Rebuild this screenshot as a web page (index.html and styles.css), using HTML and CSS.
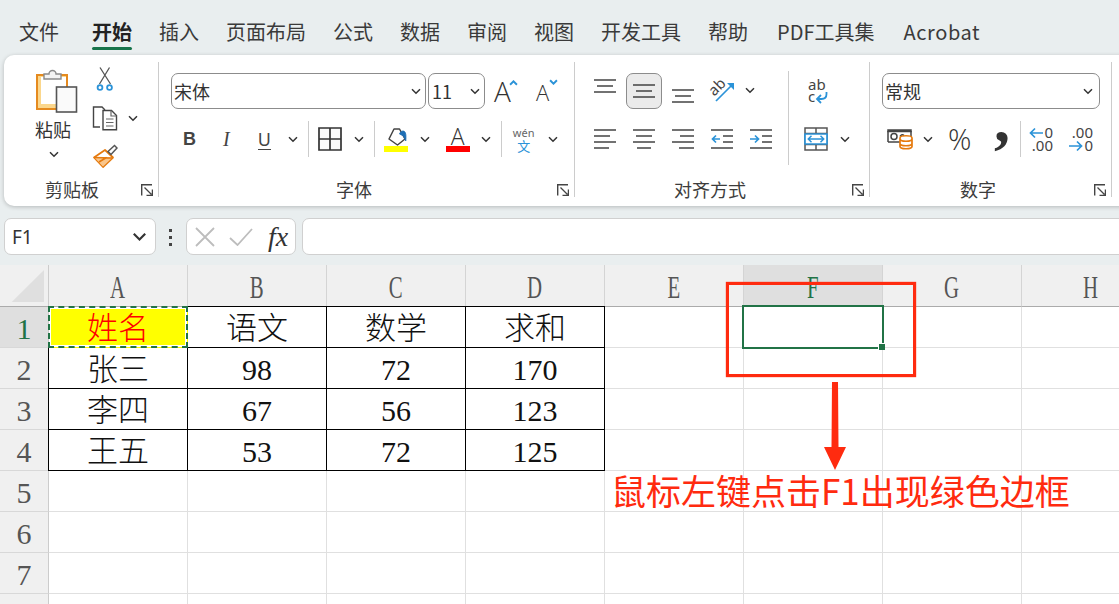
FILE: index.html
```html
<!DOCTYPE html>
<html lang="zh">
<head>
<meta charset="utf-8">
<title>Excel</title>
<link rel="stylesheet" href="styles.css">
</head>
<body>
<svg class="sprite" aria-hidden="true">
  <symbol id="chev" viewBox="0 0 10 7"><path d="M1 1.200 5 5.200 9 1.200" fill="none" stroke="#333" stroke-width="1.500"/></symbol>
  <symbol id="launch" viewBox="0 0 12 12"><path d="M.7 11.500V.7H11" fill="none" stroke="#444" stroke-width="1.400"/><path d="M3.500 3.500 10.500 10.500M11.400 5.500v5.900H5.500" fill="none" stroke="#444" stroke-width="1.300"/></symbol>
</svg>

<nav class="tabs">
  <span class="tab first">文件</span>
  <span class="tab active">开始</span>
  <span class="tab">插入</span>
  <span class="tab">页面布局</span>
  <span class="tab">公式</span>
  <span class="tab">数据</span>
  <span class="tab">审阅</span>
  <span class="tab">视图</span>
  <span class="tab">开发工具</span>
  <span class="tab wide">帮助</span>
  <span class="tab wide">PDF工具集</span>
  <span class="tab latin">Acrobat</span>
</nav>

<section class="ribbon">
  <div class="group g-clip">
    <div class="clip-body">
      <div class="paste">
        <svg class="ic-paste" viewBox="36 68 42 46">
          <rect x="37" y="75" width="30" height="34" fill="#fbd78c" stroke="#e58a1f" stroke-width="2"/>
          <rect x="41" y="77" width="25" height="27" fill="#fff"/>
          <path d="M44 79v-5h5a3.500 3.500 0 0 1 7 0h5v5z" fill="#f3f3f3" stroke="#8a8a8a" stroke-width="1.400"/>
          <rect x="56.500" y="87" width="20" height="25" fill="#fafafa" stroke="#555" stroke-width="1.600"/>
        </svg>
        <span class="paste-txt">粘贴</span>
        <svg class="chev paste-chev"><use href="#chev"/></svg>
      </div>
      <div class="clip-tools">
        <svg class="ic-cut" viewBox="96 66 18 26">
          <path d="M100 67.500 110.500 84M109.500 67.500 99.500 84" fill="none" stroke="#555" stroke-width="1.300"/>
          <circle cx="100" cy="87.500" r="2.400" fill="#fff" stroke="#2b93d8" stroke-width="1.800"/>
          <circle cx="109.500" cy="87.500" r="2.400" fill="#fff" stroke="#2b93d8" stroke-width="1.800"/>
        </svg>
        <div class="copy-row">
          <svg class="ic-copy" viewBox="92 105 26 26">
            <path d="M100 127h-6.500v-20H102l3 3" fill="none" stroke="#444" stroke-width="1.400"/>
            <path d="M103 110.500h8.500l5 5v14.300H103z" fill="#fff" stroke="#444" stroke-width="1.400"/>
            <path d="M111 110.500v5.500h5.500M106 119h7.500M106 122.500h7.500M106 126h7.500" fill="none" stroke="#666" stroke-width="1.200"/>
          </svg>
          <svg class="chev copy-chev"><use href="#chev"/></svg>
        </div>
        <svg class="ic-brush" viewBox="92 144 26 25">
          <path d="M94 157.500 105 150l8 7.500-10 9.500z" fill="#fff" stroke="#e57a0e" stroke-width="1.800" stroke-linejoin="round"/>
          <path d="M94.500 157.500 112 158l-9 8.500z" fill="#f9c58a"/>
          <path d="M94 157.500 112.500 158M99 162 106.500 157.500" fill="none" stroke="#e57a0e" stroke-width="1.600"/>
          <path d="M108 151.500l6.500-6 2.500 2.500-6 6.500z" fill="#fff" stroke="#555" stroke-width="1.500"/>
        </svg>
      </div>
    </div>
    <div class="label-row pl-clip"><span class="glabel">剪贴板</span><svg class="launch"><use href="#launch"/></svg></div>
  </div>

  <div class="group g-font">
    <div class="row r1">
      <div class="select sel-font"><span>宋体</span><svg class="chev"><use href="#chev"/></svg></div>
      <div class="select sel-size"><span>11</span><svg class="chev"><use href="#chev"/></svg></div>
      <span class="grow-a">A<svg class="caret" viewBox="0 0 10 7"><path d="M1 5.500 5 1.500 9 5.500" fill="none" stroke="#2b93d8" stroke-width="2.200"/></svg></span>
      <span class="shrink-a">A<svg class="caret" viewBox="0 0 10 7"><path d="M1 1.500 5 5.500 9 1.500" fill="none" stroke="#2b93d8" stroke-width="2.200"/></svg></span>
    </div>
    <div class="row r2">
      <b class="fb">B</b>
      <i class="fi">I</i>
      <span class="fu">U</span>
      <svg class="chev u-chev"><use href="#chev"/></svg>
      <span class="vsep s1"></span>
      <svg class="ic-border" viewBox="0 0 24 24"><path d="M1 1h22v22H1zM12 1v22M1 12h22" fill="#fafafa" stroke="#333" stroke-width="1.700"/></svg>
      <svg class="chev b-chev"><use href="#chev"/></svg>
      <span class="vsep s2"></span>
      <span class="fill-ic">
        <svg class="ic-fill" viewBox="0 0 26 19">
          <path d="M10 2h5.500L21 12l-7.500 6L5 12z" fill="#fff" stroke="#444" stroke-width="1.500" stroke-linejoin="round"/>
          <path d="M15.500 7c1-3 3.500-3.500 5-2.500 1.500 1.200 1.700 4.500 1.300 9.500l-2.300-5z" fill="#1f6fb5" stroke="#1f6fb5" stroke-width=".8"/>
        </svg>
        <span class="bar yellow"></span>
      </span>
      <svg class="chev f-chev"><use href="#chev"/></svg>
      <span class="color-a">A<span class="bar red"></span></span>
      <svg class="chev a-chev"><use href="#chev"/></svg>
      <span class="vsep s3"></span>
      <span class="wen"><span class="wen-top">wén</span><span class="wen-bot">文</span></span>
      <svg class="chev w-chev"><use href="#chev"/></svg>
    </div>
    <div class="label-row pl-font"><span class="glabel">字体</span><svg class="launch"><use href="#launch"/></svg></div>
  </div>

  <div class="group g-align">
    <div class="align-body">
      <div class="align-main">
        <div class="row r1 top-align">
          <svg class="ln al-top" viewBox="0 0 22 14"><path d="M0 1h22M3 7h16M0 13h22" stroke="#444" stroke-width="1.500"/></svg>
          <span class="btn-on"><svg class="ln" viewBox="0 0 22 14"><path d="M0 1h22M3 7h16M0 13h22" stroke="#444" stroke-width="1.500"/></svg></span>
          <svg class="ln al-bot" viewBox="0 0 22 14"><path d="M0 1h22M3 7h16M0 13h22" stroke="#444" stroke-width="1.500"/></svg>
          <svg class="ic-orient" viewBox="0 0 26 24">
            <text x="8" y="13" text-anchor="middle" transform="rotate(-45 8 8)" class="svg-t">ab</text>
            <path d="M7 22 23 6" fill="none" stroke="#2b93d8" stroke-width="1.700"/>
            <path d="M18 4h7v7z" fill="#2b93d8"/>
          </svg>
          <svg class="chev or-chev"><use href="#chev"/></svg>
        </div>
        <div class="row r2">
          <svg class="ln2 first-ln" viewBox="0 0 22 20"><path d="M0 1h22M0 7h16M0 13h22M0 19h15" stroke="#444" stroke-width="1.500"/></svg>
          <svg class="ln2 next-ln" viewBox="0 0 22 20"><path d="M0 1h22M3 7h16M0 13h22M4 19h14" stroke="#444" stroke-width="1.500"/></svg>
          <svg class="ln2 next-ln" viewBox="0 0 22 20"><path d="M0 1h22M8 7h14M0 13h22M7 19h15" stroke="#444" stroke-width="1.500"/></svg>
          <svg class="ln2 next-ln" viewBox="0 0 22 20"><path d="M0 1h22M12 7h10M12 13h10M0 19h22" stroke="#444" stroke-width="1.500"/><path d="M9 10H1.500M5 6.500 1.500 10 5 13.500" fill="none" stroke="#2b93d8" stroke-width="1.700"/></svg>
          <svg class="ln2 next-ln" viewBox="0 0 22 20"><path d="M0 1h22M12 7h10M12 13h10M0 19h22" stroke="#444" stroke-width="1.500"/><path d="M0 10h7.500M5 6.500 8.500 10 5 13.500" fill="none" stroke="#2b93d8" stroke-width="1.700"/></svg>
        </div>
      </div>
      <span class="vsep tall"></span>
      <div class="align-side">
        <svg class="ic-wrap" viewBox="0 0 24 24">
          <text x="0" y="10" class="svg-t">ab</text>
          <text x="0" y="22" class="svg-t">c</text>
          <path d="M18.500 12v2q0 5-5 5H9M13 15l-4 4 4 4" fill="none" stroke="#2b93d8" stroke-width="1.800"/>
        </svg>
        <div class="merge-row">
          <svg class="ic-merge" viewBox="0 0 24 24">
            <path d="M1 1h22v22H1zM1 6.500h22M1 17.500h22M12 1v5.500M12 17.500V23" fill="#fff" stroke="#555" stroke-width="1.500"/>
            <path d="M1 7h22v10H1z" fill="#fff" stroke="#2b93d8" stroke-width="1.700"/>
            <path d="M4 12h16M7.500 8.800 4.300 12l3.200 3.200M16.500 8.800 19.700 12l-3.200 3.200" fill="none" stroke="#2b93d8" stroke-width="1.500"/>
          </svg>
          <svg class="chev m-chev"><use href="#chev"/></svg>
        </div>
      </div>
    </div>
    <div class="label-row pl-align"><span class="glabel">对齐方式</span><svg class="launch"><use href="#launch"/></svg></div>
  </div>

  <div class="group g-num">
    <div class="row r1">
      <div class="select sel-num"><span>常规</span><svg class="chev"><use href="#chev"/></svg></div>
    </div>
    <div class="row r2">
      <svg class="ic-acct" viewBox="0 0 26 22">
        <path d="M1 2h23v1.500H1zM1 14h12" fill="none" stroke="#444" stroke-width="1.500"/>
        <path d="M1 3v11M24 3v6" fill="none" stroke="#444" stroke-width="1.500"/>
        <circle cx="7" cy="8.500" r="3" fill="none" stroke="#444" stroke-width="1.500"/>
        <path d="M13 8.500q2-3 4 -1" fill="none" stroke="#444" stroke-width="1.500"/>
        <path d="M13 10v8.500c0 3 12 3 12 0V10c0-3-12-3-12 0zM13 11c0 3 12 3 12 0M13 15.500c0 3 12 3 12 0" fill="#fff" stroke="#e57a0e" stroke-width="1.700"/>
      </svg>
      <svg class="chev ac-chev"><use href="#chev"/></svg>
      <span class="pct">%</span>
      <span class="comma">,</span>
      <span class="vsep s4"></span>
      <span class="dec d-inc"><span class="dec-a"><svg class="arr" viewBox="0 0 14 12"><path d="M14 6H1.500M6 1.500 1.500 6 6 10.500" fill="none" stroke="#2b93d8" stroke-width="1.700"/></svg>0</span><span class="dec-b">.00</span></span>
      <span class="dec d-dec"><span class="dec-a">.00</span><span class="dec-b"><svg class="arr" viewBox="0 0 14 12"><path d="M0 6h12.500M8 1.500 12.500 6 8 10.500" fill="none" stroke="#2b93d8" stroke-width="1.700"/></svg>0</span></span>
    </div>
    <div class="label-row pl-num"><span class="glabel">数字</span><svg class="launch"><use href="#launch"/></svg></div>
  </div>
</section>

<section class="fbar">
  <div class="namebox"><span>F1</span><svg class="chev big"><use href="#chev"/></svg></div>
  <div class="dots"><i></i><i></i><i></i></div>
  <div class="fx-box">
    <svg class="ic-x" viewBox="0 0 20 20"><path d="M1 1 19 19M19 1 1 19" stroke="#bdbdbd" stroke-width="1.800"/></svg>
    <svg class="ic-ok" viewBox="0 0 24 18"><path d="M1 10 8.500 17 23 1" fill="none" stroke="#bdbdbd" stroke-width="1.800"/></svg>
    <span class="fx">fx</span>
  </div>
  <div class="finput"></div>
</section>

<main class="sheet-wrap">
  <div class="sheet">
    <div class="corner"><svg viewBox="0 0 48 41"><path d="M45 5V38H12z" fill="#dfdfdf"/></svg></div>
    <div class="ch"><span class="lt">A</span></div><div class="ch"><span class="lt">B</span></div><div class="ch"><span class="lt">C</span></div><div class="ch"><span class="lt">D</span></div><div class="ch"><span class="lt">E</span></div><div class="ch sel"><span class="lt">F</span></div><div class="ch"><span class="lt">G</span></div><div class="ch"><span class="lt">H</span></div>

    <div class="rh sel">1</div><div class="c a1 z">姓名</div><div class="c k t z">语文</div><div class="c k t z">数学</div><div class="c k t z">求和</div><div class="c"></div><div class="c"></div><div class="c"></div><div class="c"></div>
    <div class="rh">2</div><div class="c k l z">张三</div><div class="c k">98</div><div class="c k">72</div><div class="c k">170</div><div class="c"></div><div class="c"></div><div class="c"></div><div class="c"></div>
    <div class="rh">3</div><div class="c k l z">李四</div><div class="c k">67</div><div class="c k">56</div><div class="c k">123</div><div class="c"></div><div class="c"></div><div class="c"></div><div class="c"></div>
    <div class="rh">4</div><div class="c k l z">王五</div><div class="c k">53</div><div class="c k">72</div><div class="c k">125</div><div class="c"></div><div class="c"></div><div class="c"></div><div class="c"></div>
    <div class="rh">5</div><div class="c"></div><div class="c"></div><div class="c"></div><div class="c"></div><div class="c"></div><div class="c"></div><div class="c"></div><div class="c"></div>
    <div class="rh">6</div><div class="c"></div><div class="c"></div><div class="c"></div><div class="c"></div><div class="c"></div><div class="c"></div><div class="c"></div><div class="c"></div>
    <div class="rh">7</div><div class="c"></div><div class="c"></div><div class="c"></div><div class="c"></div><div class="c"></div><div class="c"></div><div class="c"></div><div class="c"></div>
    <div class="rh"></div><div class="c"></div><div class="c"></div><div class="c"></div><div class="c"></div><div class="c"></div><div class="c"></div><div class="c"></div><div class="c"></div>
  </div>
  <div class="selection"><span class="handle"></span></div>
  <div class="callout"></div>
  <svg class="arrow" viewBox="0 0 24 90"><path d="M9 0H15L15.500 65H23L12 88 1 65H8.500z" fill="#ff2b0f"/></svg>
  <div class="note">鼠标左键点击F1出现绿色边框</div>
</main>
</body>
</html>
```
FILE: styles.css
```css
* { box-sizing: border-box; }
html, body { margin: 0; height: 100%; }
body {
  width: 1119px;
  height: 604px;
  overflow: hidden;
  background: #e9eeef;
  color: #333;
  font-family: "Noto Sans CJK SC", "Noto Sans", sans-serif;
}
.sprite { display: none; }

/* tabs */
.tabs { display: flex; height: 55px; padding: 17px 0 0 19px; font-size: 20px; line-height: 30px; color: #3a3a3a; }
.tab { position: relative; margin-right: 27px; flex: none; height: 33px; }
.tab.first { margin-right: 33px; }
.tab.wide { margin-right: 29px; }
.tab.latin { letter-spacing: .6px; }
.tab.active { font-weight: 700; color: #222; }
.tab.active::after { content: ""; position: absolute; left: 0; right: 0; top: 30px; height: 3px; border-radius: 2px; background: #17734a; }

/* ribbon */
.ribbon { display: flex; height: 151px; margin-left: 4px; width: 1140px; padding-top: 7px; background: #fff; border-radius: 10px 0 0 10px; box-shadow: 0 1px 4px rgba(0,0,0,.22); }
.group { display: flex; flex-direction: column; flex: none; height: 135px; border-right: 1px solid #ccc; }
.g-clip { width: 155px; }
.g-font { width: 416px; }
.g-align { width: 295px; }
.g-num { width: 242px; }
.chev { width: 10px; height: 7px; flex: none; display: block; }
.launch { width: 12px; height: 12px; flex: none; display: block; }
.glabel { font-size: 18px; line-height: 24px; color: #3c3c3c; white-space: nowrap; }
.label-row { display: flex; align-items: center; height: 24px; margin-top: auto; margin-bottom: -4px; }
.pl-clip { padding-left: 41px; }
.pl-clip .launch { margin-left: 42px; margin-top: 2px; }
.pl-font { padding-left: 177px; }
.pl-font .launch { margin-left: 185px; margin-top: 2px; }
.pl-align { padding-left: 99px; }
.pl-align .launch { margin-left: 106px; margin-top: 2px; }
.pl-num { padding-left: 90px; }
.pl-num .launch { margin-left: 98px; margin-top: 2px; }

.clip-body { display: flex; }
.paste { display: flex; flex-direction: column; width: 89px; padding: 6px 0 0 32px; }
.ic-paste { width: 42px; height: 46px; flex: none; }
.paste-txt { font-size: 18px; line-height: 24px; margin: 3px 0 0 -1px; color: #333; white-space: nowrap; }
.paste-chev { margin: 10px 0 0 13px; }
.clip-tools { display: flex; flex-direction: column; }
.ic-cut { width: 18px; height: 26px; margin: 4px 0 0 3px; }
.copy-row { display: flex; align-items: center; margin: 13px 0 0 -1px; }
.ic-copy { width: 26px; height: 26px; }
.copy-chev { margin-left: 10px; }
.ic-brush { width: 26px; height: 25px; margin: 13px 0 0 -1px; }

.row { display: flex; align-items: center; flex: none; }
.r1 { height: 36px; margin-top: 11px; }
.r2 { height: 36px; margin-top: 12px; }
.select { display: flex; align-items: center; justify-content: space-between; height: 36px; padding: 0 4px 0 2px; border: 1px solid #8c8c8c; border-radius: 7px; background: #fff; font-size: 18px; line-height: 24px; color: #333; flex: none; }
.sel-font { width: 255px; margin-left: 12px; }
.sel-size { width: 57px; margin-left: 2px; padding-left: 3px; }
.sel-num { width: 218px; margin-left: 12px; padding-right: 6px; }
.grow-a, .shrink-a { position: relative; display: block; flex: none; font-family: "Open Sans", sans-serif; font-weight: 300; color: #333; line-height: 36px; }
.grow-a { font-size: 28px; width: 24px; margin-left: 9px; }
.shrink-a { font-size: 22px; width: 20px; margin-left: 18px; padding-top: 2px; }
.caret { position: absolute; width: 9px; height: 6px; }
.grow-a .caret { left: 15px; top: 7px; }
.shrink-a .caret { left: 13px; top: 7px; }

.fb, .fi, .fu { display: block; flex: none; font-size: 18px; line-height: 24px; color: #444; }
.fb { font-family: "Liberation Sans", sans-serif; margin-left: 24px; }
.fi { font-family: "Liberation Serif", serif; font-size: 20px; margin-left: 27px; }
.fu { font-family: "Noto Sans", sans-serif; margin-left: 28px; border-bottom: 1.500px solid #444; line-height: 20px; width: 13px; text-align: center; }
.u-chev { margin-left: 17px; }
.vsep { display: block; flex: none; width: 1px; height: 36px; background: #ccc; }
.s1 { margin-left: 10px; }
.ic-border { width: 24px; height: 24px; margin-left: 9px; flex: none; }
.b-chev { margin-left: 12px; }
.s2 { margin-left: 10px; }
.fill-ic { display: flex; flex-direction: column; width: 26px; margin-left: 9px; flex: none; }
.ic-fill { width: 26px; height: 19px; }
.bar { display: block; height: 6px; width: 24px; }
.yellow { background: #ffff00; }
.red { background: #ff0000; }
.f-chev { margin-left: 10px; }
.color-a { display: flex; flex-direction: column; width: 24px; margin-left: 16px; flex: none; align-items: center; font-family: "Open Sans", sans-serif; font-weight: 300; font-size: 23px; line-height: 19px; color: #333; }
.a-chev { margin-left: 11px; }
.s3 { margin-left: 10px; }
.wen { display: flex; flex-direction: column; align-items: center; width: 24px; margin-left: 10px; flex: none; }
.wen-top { font-family: "Noto Sans", sans-serif; font-size: 11px; line-height: 13px; color: #666; }
.wen-bot { font-size: 13px; line-height: 13px; color: #2b93d8; }
.w-chev { margin-left: 12px; }

.align-body { display: flex; }
.align-main { width: 212px; }
.top-align { align-items: flex-start; }
.ln { width: 22px; height: 14px; display: block; flex: none; }
.al-top { margin: 6px 0 0 19px; }
.btn-on { display: flex; align-items: center; justify-content: center; flex: none; width: 36px; height: 36px; margin-left: 10px; border: 1px solid #8c8c8c; border-radius: 7px; background: #ebebeb; }
.al-bot { margin: 16px 0 0 10px; }
.ic-orient { width: 26px; height: 24px; margin: 6px 0 0 15px; flex: none; overflow: visible; }
.svg-t { font-family: "Noto Sans", sans-serif; font-size: 15px; fill: #444; }
.or-chev { margin: 14px 0 0 10px; }
.ln2 { width: 22px; height: 20px; flex: none; }
.first-ln { margin-left: 19px; }
.next-ln { margin-left: 17px; }
.tall { height: 94px; margin: 9px 0 0 1px; }
.align-side { display: flex; flex-direction: column; }
.ic-wrap { width: 24px; height: 24px; margin: 18px 0 0 19px; overflow: visible; }
.merge-row { display: flex; align-items: center; margin: 23px 0 0 15px; }
.ic-merge { width: 24px; height: 24px; flex: none; }
.m-chev { margin-left: 12px; }

.ic-acct { width: 26px; height: 22px; margin-left: 17px; flex: none; }
.ac-chev { margin-left: 10px; }
.pct { font-family: "Open Sans", sans-serif; font-weight: 300; font-size: 29px; line-height: 36px; color: #333; margin-left: 15px; flex: none; width: 24px; }
.comma { align-self: flex-start; font-family: "Liberation Serif", serif; font-weight: 700; font-size: 64px; line-height: 36px; height: 36px; color: #333; margin: -19px 0 0 22px; flex: none; width: 12px; }
.s4 { margin-left: 14px; }
.dec { display: flex; flex-direction: column; width: 24px; flex: none; font-family: "Noto Sans", sans-serif; font-size: 15px; line-height: 13px; color: #444; }
.d-inc { margin-left: 8px; }
.d-dec { margin-left: 16px; }
.dec-a, .dec-b { display: flex; align-items: center; justify-content: flex-end; height: 13px; white-space: nowrap; }
.arr { width: 14px; height: 12px; flex: none; margin-right: 1px; }

/* formula bar */
.fbar { display: flex; align-items: flex-start; height: 59px; padding: 12px 0 0 4px; }
.namebox { display: flex; align-items: center; justify-content: space-between; width: 152px; height: 37px; padding: 0 8px 0 7px; background: #fff; border: 1px solid #d0d0d0; border-radius: 7px; font-family: "Noto Sans", sans-serif; font-size: 19px; color: #333; }
.chev.big { width: 15px; height: 10px; }
.dots { display: flex; flex-direction: column; gap: 4px; margin: 11px 0 0 13px; }
.dots i { display: block; width: 3px; height: 3px; background: #444; }
.fx-box { display: flex; align-items: center; width: 110px; height: 37px; margin-left: 14px; background: #fff; border: 1px solid #d0d0d0; border-radius: 7px; }
.ic-x { width: 20px; height: 20px; margin-left: 8px; flex: none; }
.ic-ok { width: 24px; height: 18px; margin-left: 14px; flex: none; }
.fx { font-family: "Liberation Serif", serif; font-style: italic; font-size: 28px; line-height: 30px; color: #333; margin-left: 15px; }
.finput { flex: 1; height: 37px; margin-left: 6px; margin-right: -20px; background: #fff; border: 1px solid #d0d0d0; border-radius: 7px; }

/* sheet */
.sheet-wrap { position: relative; height: 339px; overflow: hidden; }
.sheet { display: grid; grid-template-columns: 49px repeat(8, 139px); grid-template-rows: 42px; grid-auto-rows: 41px; width: 1161px; background: #fff; font-family: "Liberation Serif", "Noto Sans CJK SC", serif; font-size: 30px; color: #111; }
.corner { background: #f0f0f0; border-right: 1px solid #ccc; border-bottom: 1px solid #ababab; }
.corner svg { display: block; width: 47px; height: 40px; }
.ch { display: flex; align-items: center; justify-content: center; background: #f0f0f0; border-right: 1px solid #d4d4d4; border-bottom: 1px solid #ababab; color: #555; font-size: 32px; padding-top: 2px; }
.ch.sel { background: #dfdfdf; color: #217346; }
.lt { display: block; transform: scaleX(.65); line-height: 40px; }
.rh { display: flex; align-items: center; justify-content: center; padding-top: 3px; background: #f0f0f0; border-right: 1px solid #ccc; border-bottom: 1px solid #d8d8d8; color: #555; line-height: 36px; }
.rh.sel { background: #dfdfdf; color: #217346; }
.c { display: flex; align-items: center; justify-content: center; padding-top: 3px; background: #fff; border-right: 1px solid #e0e0e0; border-bottom: 1px solid #e0e0e0; line-height: 36px; white-space: nowrap; }
.c.z { font-size: 31px; font-weight: 300; }
.c.k { border-right-color: #000; border-bottom-color: #000; }
.c.t { box-shadow: 0 -1px 0 #000; }
.c.l { box-shadow: -1px 0 0 #000; }
.c.a1 { position: relative; background: #ffff00; color: #ff0000; box-shadow: inset 0 0 0 2px #fff; border-color: transparent; }
.c.a1::after { content: ""; position: absolute; inset: -1px; border: 2px dashed #217346; }

.selection { position: absolute; left: 742px; top: 40px; width: 142px; height: 44px; border: 2px solid #217346; }
.handle { position: absolute; right: -3px; bottom: -3px; background: #217346; border: 1px solid #fff; border-width: 1px 0 0 1px; box-sizing: content-box; width: 6px; height: 6px; }
.callout { position: absolute; left: 726px; top: 17px; width: 190px; height: 95px; border: 3px solid #ff2b0f; box-shadow: 0 0 1px #ff2b0f; }
.arrow { position: absolute; left: 823px; top: 117px; width: 24px; height: 90px; }
.note { position: absolute; left: 611px; top: 203px; font-family: "Noto Sans CJK SC", sans-serif; font-size: 35px; line-height: 44px; color: #ff2b0f; white-space: nowrap; }
```
